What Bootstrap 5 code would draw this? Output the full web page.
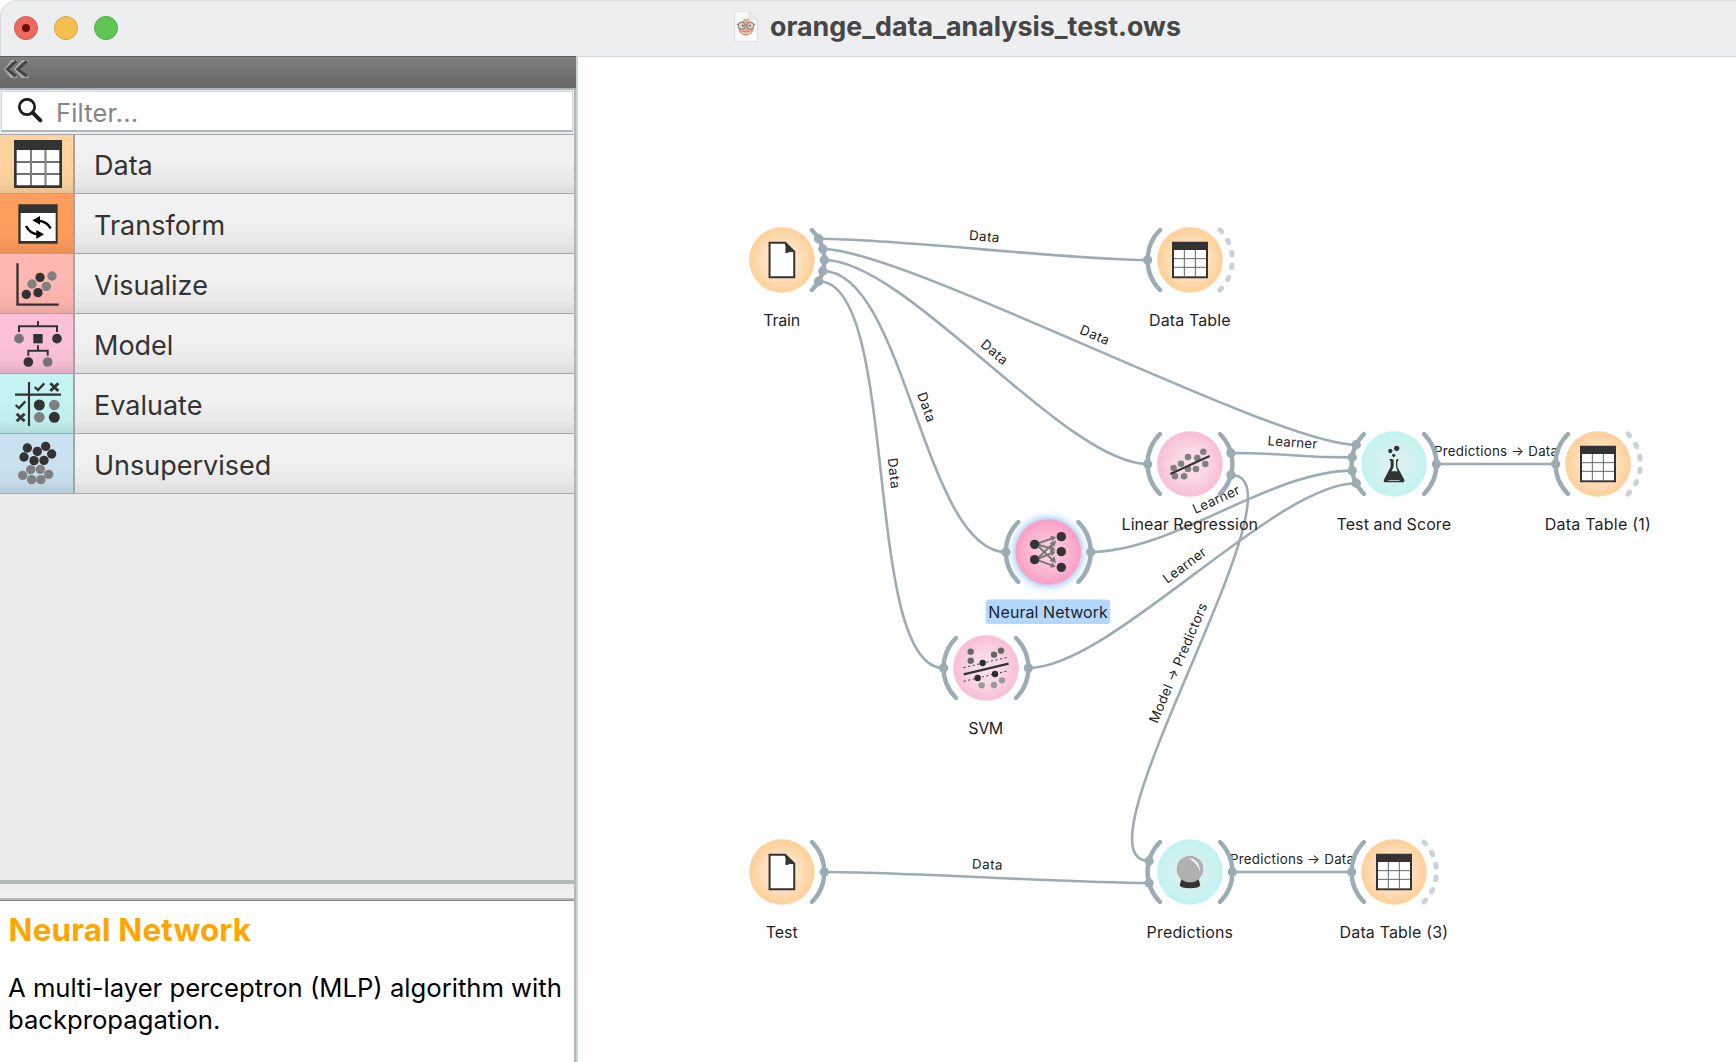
<!DOCTYPE html>
<html lang="en">
<head>
<meta charset="utf-8">
<title>orange_data_analysis_test.ows</title>
<link href="https://cdn.jsdelivr.net/npm/bootstrap@5.3.0/dist/css/bootstrap.min.css" rel="stylesheet">
<style>
body{font-family:Inter,"Liberation Sans",sans-serif;background:#fff;color:#000}
.titlebar{height:56px;background:#edeef0;border-radius:17px 0 0 0;border-top:1px solid #e2e3e5;box-shadow:inset 1px 0 0 #d4d6d8}
.lights{padding:0 0 1px 14px;gap:16px}
.light{width:24px;height:24px;border-radius:50%;border:1px solid}
.light-close{background:#ec6a5e;border-color:#d8574b}
.light-close i{width:8px;height:8px;border-radius:50%;background:#6b0d0a}
.light-min{background:#f4bf4f;border-color:#dba53c}
.light-max{background:#61c554;border-color:#4fae41}
.doc-title{margin-left:616px;gap:12px;padding-bottom:4px}
.file-ic{opacity:.8}
.file-title{font-size:26.85px;font-weight:700;color:#464646;line-height:1;white-space:pre}
.side{width:578px;border-right:2px solid #ccd3d6}
.side-in{border-right:2px solid #b1b8b8;background:#ececec}
.dockbar{height:32px;background:linear-gradient(#7f7f7f,#666);border-top:1px solid #5b5b5b;margin-right:-2px}
.search-wrap{height:46px;background:#e9eef2;border-top:2px solid #afb6b9;padding:1px 1px 3px 1px}
.search-box{background:#fff;border:1px solid #cfd5dc;border-bottom:2px solid #b0b7bc;height:41px;padding-left:15px}
.ph{font-size:25.5px;letter-spacing:.15px;color:#868686;line-height:1;padding:4px 0 0 13px}
.cats{border-top:1px solid #a6a6a6}
.cat{height:60px;border-bottom:1px solid #a6a6a6;background:linear-gradient(#f2f2f2 0,#f0f0f0 50%,#e8e8e8 80%,#dcdcdc)}
.cat-first{height:59px}
.cat-ic{width:75px;border-right:2px solid #a4a4a4}
.cat-ic svg{width:73px;height:59px;display:block}
.cat-first svg{height:58px}
.cat-name{font-size:27px;color:#333;line-height:1;padding:4px 0 0 19px}
.cat-first .cat-name{padding-top:2px}
.shade{background-image:linear-gradient(rgba(0,0,0,0) 50%,rgba(0,0,0,.025) 80%,rgba(0,0,0,.09))}
.c-data{background-color:#ffd39f}.c-trans{background-color:#ff9d5e}.c-vis{background-color:#ffb7b1}
.c-model{background-color:#fac1d9}.c-eval{background-color:#c3f3f2}.c-uns{background-color:#cae1ef}
.splitter{height:18px;border-top:4px solid #b1b8b6;background:linear-gradient(#eee,#f1f1f1)}
.info{height:165px;background:#fff;border-top:2px solid #b4b6b8;box-shadow:inset 0 1px 0 #86898c;padding:0 8px}
.info h1{font-size:31.4px;letter-spacing:.15px;font-weight:700;color:orange;line-height:36px;margin:12px 0 24px .6px}
.info p{font-size:25.65px;line-height:32px;margin:0;white-space:nowrap}
.flow{width:1158px;height:1006px;display:block}
.titleline{border-top:1px solid #d5d6d7}
.t-node{font-size:16px;fill:#1f1f1f;text-anchor:middle}
.t-link{font-size:13.3px;fill:#222;text-anchor:middle}
</style>
<script src="https://cdn.jsdelivr.net/npm/bootstrap@5.3.0/dist/js/bootstrap.bundle.min.js"></script>
</head>
<body class="vh-100 overflow-hidden d-flex flex-column">
<header class="titlebar d-flex align-items-center flex-shrink-0">
  <div class="lights d-flex flex-shrink-0">
    <span class="light light-close d-flex align-items-center justify-content-center"><i></i></span>
    <span class="light light-min"></span>
    <span class="light light-max"></span>
  </div>
  <div class="doc-title d-flex align-items-center">
    <svg class="file-ic" width="24" height="32" viewBox="0 0 72 96">
      <path d="M2 2H44L70 26V92H2Z" fill="#fdfdfd" stroke="#cfd0d2" stroke-width="2"/>
      <path d="M44 2V26H70Z" fill="#ececed" stroke="#d4d4d6" stroke-width="2"/>
      <circle cx="36" cy="50" r="24" fill="#ee9a78"/>
      <path d="M16 56Q36 88 56 56Q36 66 16 56Z" fill="#b96f66"/><path d="M21 60Q36 70 51 60L48 65Q36 72 24 65Z" fill="#f5e9e6"/>
      <path d="M30 28L28 21L35 24L42 21L43 28Z" fill="#7fd096"/>
      <g fill="#f1d3bd" stroke="#77716e" stroke-width="3.5"><circle cx="23" cy="44" r="10"/><circle cx="49" cy="44" r="10"/><path d="M8 39L14 42M64 39L58 42M33 42Q36 40 39 42"/></g>
      <circle cx="26" cy="44" r="3.5" fill="#555"/><circle cx="47" cy="44" r="3.5" fill="#555"/>
    </svg>
    <span class="file-title">orange_data_analysis_test.ows</span>
  </div>
</header>
<div class="d-flex flex-grow-1">
<aside class="side flex-shrink-0 d-flex">
<div class="side-in w-100 d-flex flex-column">
  <div class="dockbar flex-shrink-0">
    <svg width="36" height="26" viewBox="3 0 108 78" class="d-block"><g fill="none" stroke-width="9"><path d="M54 12L38 12L18 37L36 60L54 60M88 12L70 12L48 37L68 60L90 60" stroke="#b9b9b9" stroke-width="4"/><path d="M52 12L24 37L50 58M84 12L56 37L84 58" stroke="#444"/><path d="M15 36L42 60M46 36L74 60" stroke="#aaa" stroke-width="4"/></g></svg>
  </div>
  <div class="search-wrap flex-shrink-0">
    <div class="search-box d-flex align-items-center">
      <svg width="26" height="26" viewBox="0 0 78 78" class="flex-shrink-0"><circle cx="30" cy="27" r="23" fill="none" stroke="#1f1f1f" stroke-width="8.500"/><path d="M47 44L70 67" stroke="#1f1f1f" stroke-width="12" stroke-linecap="round"/></svg>
      <span class="ph">Filter...</span>
    </div>
  </div>
  <div class="cats flex-shrink-0">
    <div class="cat cat-first d-flex align-items-center">
      <div class="cat-ic c-data shade"><svg viewBox="0 405 219 174"><path d="M42 420H186V564H42Z" fill="#333"/><path d="M50 450H90V483H50ZM95 450H134V483H95ZM139 450H178V483H139ZM50 489H90V519H50ZM95 489H134V519H95ZM139 489H178V519H139ZM50 525H90V556H50ZM95 525H134V556H95ZM139 525H178V556H139Z" fill="#fff"/><path d="M50 486H178M50 522H178M92.500 450V556M136.500 450V556" stroke="#888" stroke-width="4"/></svg></div>
      <span class="cat-name">Data</span></div>
    <div class="cat d-flex align-items-center">
      <div class="cat-ic c-trans shade"><svg viewBox="0 12 219 177"><path d="M55 43H173V161H55Z" fill="#333"/><path d="M62 69H167V153H62Z" fill="#fff"/><g fill="none" stroke="#000" stroke-width="7.500"><path d="M152 115Q140 93 114 92"/><path d="M78 108Q90 131 114 133"/></g><path d="M97 91L120 78V104ZM132 133L109 120V147Z"/></svg></div>
      <span class="cat-name">Transform</span></div>
    <div class="cat d-flex align-items-center">
      <div class="cat-ic c-vis shade"><svg viewBox="0 192 219 177"><path d="M52.500 220V344H176" fill="none" stroke="#333" stroke-width="7"/><g fill="#333"><circle cx="120" cy="262" r="14"/><circle cx="79" cy="313" r="14"/><circle cx="114" cy="308" r="14"/></g><g fill="#808080"><circle cx="156" cy="258" r="14"/><circle cx="96" cy="282" r="14"/><circle cx="139" cy="289" r="14"/></g></svg></div>
      <span class="cat-name">Visualize</span></div>
    <div class="cat d-flex align-items-center">
      <div class="cat-ic c-model shade"><svg viewBox="0 372 219 177"><path d="M57 426V409H171V426M114 393V410M85 497V482H143V497M114 466V482" fill="none" stroke="#333" stroke-width="6"/><path d="M100 432H128V460H100Z" fill="#333"/><circle cx="171" cy="446" r="14.500" fill="#333"/><circle cx="85" cy="516" r="14.500" fill="#333"/><circle cx="57" cy="446" r="14.500" fill="#757575"/><circle cx="143" cy="516" r="14.500" fill="#757575"/></svg></div>
      <span class="cat-name">Model</span></div>
    <div class="cat d-flex align-items-center">
      <div class="cat-ic c-eval shade"><svg viewBox="0 552 219 177"><path d="M87 576V708M45 614H183" stroke="#333" stroke-width="6.500"/><g fill="none" stroke="#333" stroke-width="7"><path d="M104 591L114 600L133 580M47 645L57 654L76 634"/><path d="M151 580L175 603M175 580L151 603M50 671L74 694M74 671L50 694" stroke-width="8.500"/></g><circle cx="118" cy="645" r="16.500" fill="#333"/><circle cx="163" cy="682" r="16.500" fill="#333"/><circle cx="163" cy="645" r="16" fill="#808080"/><circle cx="118" cy="682" r="16" fill="#808080"/></svg></div>
      <span class="cat-name">Evaluate</span></div>
    <div class="cat d-flex align-items-center">
      <div class="cat-ic c-uns shade"><svg viewBox="0 732 219 177"><g fill="#333"><circle cx="82" cy="774" r="14"/><circle cx="137" cy="769" r="14"/><circle cx="112" cy="784" r="14"/><circle cx="155" cy="792" r="14"/><circle cx="72" cy="801" r="14"/><circle cx="102" cy="812" r="14"/><circle cx="132" cy="811" r="14"/></g><g fill="#808080"><circle cx="92" cy="839" r="14"/><circle cx="121" cy="838" r="14"/><circle cx="68" cy="856" r="14"/><circle cx="146" cy="853" r="14"/><circle cx="95" cy="869" r="14"/><circle cx="123" cy="869" r="14"/></g></svg></div>
      <span class="cat-name">Unsupervised</span></div>
  </div>
  <div class="flex-grow-1"></div>
  <div class="splitter flex-shrink-0"></div>
  <div class="info flex-shrink-0">
    <h1>Neural Network</h1>
    <p>A multi-layer perceptron (MLP) algorithm with<br>backpropagation.</p>
  </div>
</div>
</aside>
<main class="flex-grow-1 titleline">
<svg class="flow" id="flow" viewBox="578 57 1158 1006">
<defs>
  <radialGradient id="g-o"><stop offset="0" stop-color="#fff0e2"/><stop offset=".45" stop-color="#fee4c8"/><stop offset="1" stop-color="#ffcf97"/></radialGradient>
  <radialGradient id="g-p"><stop offset="0" stop-color="#f8e1ea"/><stop offset=".45" stop-color="#f9d9e5"/><stop offset="1" stop-color="#fabdd7"/></radialGradient>
  <radialGradient id="g-s"><stop offset="0" stop-color="#fbd9e6"/><stop offset="1" stop-color="#fa9fc5"/></radialGradient>
  <radialGradient id="g-t"><stop offset="0" stop-color="#e0efee"/><stop offset=".45" stop-color="#d5f1f0"/><stop offset="1" stop-color="#c1f3f1"/></radialGradient>
  <filter id="glow" x="-40%" y="-40%" width="180%" height="180%"><feGaussianBlur stdDeviation="4"/></filter>
  <g id="i-doc"><path d="M-37 -52H10L37 -25V52H-37Z" fill="#fff" stroke="#333" stroke-width="6"/><path d="M10 -52L39 -25Q24 -27 12 -22Q14 -40 10 -52Z" fill="#333" stroke="#333" stroke-width="3"/></g>
  <g id="i-table"><path d="M-54 -55H54V55H-54Z" fill="#333"/><path d="M-48 -30H48V49H-48Z" fill="#fff"/><path d="M-48 -4H48M-48 22H48M-17 -30V49M16 -30V49" stroke="#666" stroke-width="3"/></g>
  <g id="i-lin" transform="translate(-240 -162)"><g fill="#808080"><circle cx="191" cy="174" r="9.800"/><circle cx="213" cy="161" r="9.800"/><circle cx="234" cy="141" r="9.800"/><circle cx="262" cy="144" r="9.800"/><circle cx="280" cy="125" r="9.800"/><circle cx="195" cy="199" r="9.800"/><circle cx="222" cy="199" r="9.800"/><circle cx="234" cy="177" r="9.800"/><circle cx="258" cy="177" r="9.800"/><circle cx="286" cy="162" r="9.800"/></g><path d="M181 192L299 138" stroke="#333" stroke-width="6"/></g>
  <g id="i-flask" transform="translate(-852 -162)" fill="#333"><path d="M838 147H847L851 151V170L834 206Q832 212 838 213H866Q872 212 870 206L858 170V151L861 147H865V151L862 155V170L883 209Q885 217 877 217H827Q819 217 822 209L842 170V155Z"/><path d="M841 184H863L880 211H824Z"/><circle cx="841" cy="123" r="6.500"/><circle cx="860" cy="115" r="8"/><circle cx="851" cy="136" r="5"/></g>
  <g id="i-nn" transform="translate(-355 -156)"><path d="M327 129L366 115M327 135L366 146M327 141L368 180M327 171L368 132M327 175L366 159M327 182L366 196" stroke="#777" stroke-width="6"/><path d="M361 107L379 111L366 124ZM364 136L377 150L360 155ZM374 169L378 190L359 182ZM359 129L379 121L373 141ZM359 151L377 155L366 169ZM366 187L377 200L361 204Z" fill="#777"/><g fill="#333"><circle cx="314" cy="133" r="14"/><circle cx="314" cy="179" r="14"/><circle cx="394" cy="110" r="14"/><circle cx="394" cy="155" r="14"/><circle cx="394" cy="202" r="14"/></g></g>
  <g id="i-svm" transform="translate(-168 -504)"><path d="M101 523L236 491" stroke="#333" stroke-width="6.500"/><path d="M101 503L236 471M101 544L236 512" stroke="#333" stroke-width="3" stroke-dasharray="6 8"/><g fill="#666"><circle cx="122" cy="455" r="9.500"/><circle cx="122" cy="482" r="9.500"/><circle cx="192" cy="464" r="9.500"/><circle cx="213" cy="452" r="9.500"/></g><g fill="#2b2b2b"><circle cx="158" cy="489" r="9.500"/><circle cx="143" cy="534" r="9.500"/><circle cx="195" cy="522" r="9.500"/></g><g fill="#999"><circle cx="155" cy="556" r="9.500"/><circle cx="192" cy="555" r="9.500"/><circle cx="216" cy="541" r="9.500"/></g></g>
  <g id="i-ball" transform="translate(-210 -156)"><path d="M184 178H236L241 196Q238 205 210 205Q182 205 179 196Z" fill="#333"/><circle cx="210" cy="147" r="40" fill="#b0b0b0"/><path d="M205 114Q238 118 240 154Q230 126 205 114Z" fill="#fff"/></g>
</defs>
</svg>
</main>
</div>
<script>
const NS = 'http://www.w3.org/2000/svg', flow = document.getElementById('flow');
const el = (tag, attrs, parent = flow, text) => {
  const e = document.createElementNS(NS, tag);
  for (const k in attrs) e.setAttribute(k, attrs[k]);
  if (text) e.textContent = text;
  parent.appendChild(e);
  return e;
};
const R = 42.4, INK = '#9cacb4';
// x, y, fill, icon, caption, caption width, input anchor angles, output anchor angles
const nodes = {
  train: [781.9, 260, 'g-o', 'i-doc', 'Train', 37, null, [-30, -15, 0, 15, 30]],
  dt:    [1190, 260, 'g-o', 'i-table', 'Data Table', 81.5, [0], []],
  lr:    [1190, 464, 'g-p', 'i-lin', 'Linear Regression', 136.5, [0], [-15, 15]],
  ts:    [1394, 464, 'g-t', 'i-flask', 'Test and Score', 114.5, [-27, -9, 9, 27], [0]],
  dt1:   [1598, 464, 'g-o', 'i-table', 'Data Table (1)', 106, [0], []],
  nn:    [1048.3, 552, 'g-s', 'i-nn', 'Neural Network', 119.5, [0], [0]],
  svm:   [986, 668, 'g-p', 'i-svm', 'SVM', 35, [0], [0]],
  test:  [781.9, 872, 'g-o', 'i-doc', 'Test', 32, null, [0]],
  pred:  [1190, 872, 'g-t', 'i-ball', 'Predictions', 86.5, [-15, 15], [0]],
  dt3:   [1394, 872, 'g-o', 'i-table', 'Data Table (3)', 108.5, [0], []]
};
// source, output index, sink, input index, label, label width
const links = [
  ['train', 0, 'dt', 0, 'Data', 30.5], ['train', 1, 'ts', 0, 'Data', 30.5], ['train', 2, 'lr', 0, 'Data', 30.5],
  ['train', 3, 'nn', 0, 'Data', 30.5], ['train', 4, 'svm', 0, 'Data', 30.5], ['lr', 0, 'ts', 1, 'Learner', 50],
  ['nn', 0, 'ts', 2, 'Learner', 50], ['svm', 0, 'ts', 3, 'Learner', 50], ['ts', 0, 'dt1', 0, 'Predictions → Data', 124],
  ['lr', 1, 'pred', 0, 'Model → Predictors', 128.5], ['test', 0, 'pred', 1, 'Data', 30.5], ['pred', 0, 'dt3', 0, 'Predictions → Data', 124]
];
const at = (n, side, deg) => {
  const a = deg * Math.PI / 180;
  return [n[0] + side * R * Math.cos(a), n[1] + R * Math.sin(a)];
};
for (const [s, so, t, ti, label, w] of links) {
  const p = at(nodes[s], 1, nodes[s][7][so]), q = at(nodes[t], -1, nodes[t][6][ti]);
  const c = Math.min(Math.hypot(q[0] - p[0], q[1] - p[1]) / 2, 82);
  el('path', {d: `M${p}C${p[0] + c} ${p[1]} ${q[0] - c} ${q[1]} ${q}`, fill: 'none', stroke: INK, 'stroke-width': 2.6});
  let ang = Math.atan2(2 * (q[1] - p[1]), 2 * (q[0] - p[0]) - 2 * c) * 180 / Math.PI;
  if (ang > 90) ang -= 180;
  el('text', {class: 't-link', y: -8.3, textLength: w,
    transform: `translate(${(p[0] + q[0]) / 2} ${(p[1] + q[1]) / 2}) rotate(${ang})`}, flow, label);
}
for (const k in nodes) {
  const [x, y, fill, icon, name, w, ins, outs] = nodes[k];
  const g = el('g', {});
  const arc = side => `M${at(nodes[k], side, -45)}A${R} ${R} 0 0 ${side > 0 ? 1 : 0} ${at(nodes[k], side, 45)}`;
  for (const [side, angs] of [[-1, ins], [1, outs]]) {
    if (!angs) continue;
    const a = {d: arc(side), fill: 'none', stroke: angs.length ? INK : '#c9d2d7', 'stroke-width': angs.length ? 4.4 : 5, 'stroke-linecap': 'round'};
    if (!angs.length) a['stroke-dasharray'] = '2.6 10.2';
    el('path', a, g);
    for (const d of angs) { const [cx, cy] = at(nodes[k], side, d); el('circle', {cx, cy, r: 4.7, fill: INK}, g); }
  }
  if (k === 'nn') el('circle', {cx: x, cy: y, r: 34, fill: '#8fbcee', filter: 'url(#glow)'}, g);
  el('circle', {cx: x, cy: y, r: 32.8, fill: `url(#${fill})`}, g);
  el('use', {href: '#' + icon, transform: `translate(${x} ${y}) scale(.3333)`}, g);
  if (k === 'nn') el('rect', {x: 985.7, y: 599.5, width: 124.5, height: 24.5, rx: 3.5, fill: '#b3d7ff'}, g);
  el('text', {class: 't-node', x: x - .2, y: y + 65.8, textLength: w}, g, name);
}
</script>
</body>
</html>
